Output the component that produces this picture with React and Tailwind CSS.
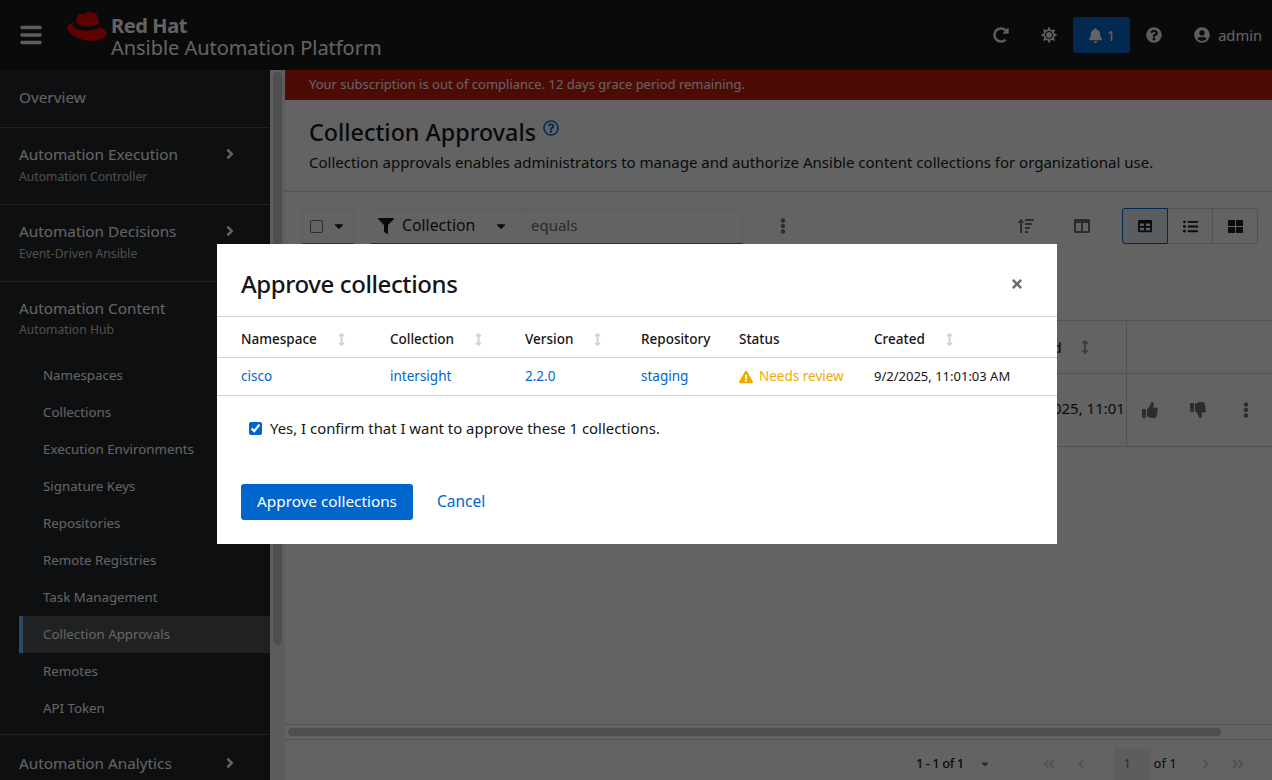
import {
  FaBars, FaRedoAlt, FaSun, FaBell, FaQuestionCircle, FaUserCircle, FaAngleRight, FaRegQuestionCircle,
  FaCaretDown, FaFilter, FaEllipsisV, FaSortAmountUp, FaColumns, FaTable, FaListUl, FaThLarge, FaArrowsAltV,
  FaThumbsUp, FaThumbsDown, FaTimes, FaExclamationTriangle, FaAngleDoubleLeft, FaAngleLeft, FaAngleDoubleRight,
} from 'react-icons/fa'

const hubItems = [
  'Namespaces', 'Collections', 'Execution Environments', 'Signature Keys', 'Repositories',
  'Remote Registries', 'Task Management', 'Collection Approvals', 'Remotes', 'API Token',
]

function NavGroup({ title, sub }) {
  return (
    <div className="flex h-[77px] flex-col justify-center border-b border-[#4f5255] pb-[2px] pl-[19px] pr-[32px]">
      <div className="flex items-center justify-between text-white">
        <span className="text-[15.3px] leading-[22px]">{title}</span>
        <FaAngleRight className="text-[16px]" />
      </div>
      <span className="mt-[2px] text-[12.2px] leading-[20px] text-[#c7c7c7]">{sub}</span>
    </div>
  )
}

function Sidebar() {
  return (
    <aside className="flex h-full w-[285px] shrink-0 bg-[#212427]">
      <nav className="w-[270px] shrink-0 overflow-hidden">
        <div className="flex h-[58px] items-center border-b border-[#4f5255] pb-[2px] pl-[19px] text-[15.3px] text-white">Overview</div>
        <NavGroup title="Automation Execution" sub="Automation Controller" />
        <NavGroup title="Automation Decisions" sub="Event-Driven Ansible" />
        <div className="border-b border-[#4f5255] pb-[7px]">
          <div className="flex h-[75px] flex-col justify-center pb-[3px] pl-[19px] text-white">
            <span className="text-[15.3px] leading-[22px]">Automation Content</span>
            <span className="mt-[1px] text-[12.2px] leading-[20px] text-[#c7c7c7]">Automation Hub</span>
          </div>
          {hubItems.map(item => (
            item === 'Collection Approvals' ? (
              <div key={item} className="ml-[19px] flex h-[37px] items-center border-l-[4px] border-[#73bcf7] bg-[#4f5255] pl-[20px] text-[13.3px] text-white">{item}</div>
            ) : (
              <div key={item} className="flex h-[37px] items-center pl-[43px] text-[13.3px] text-white">{item}</div>
            )
          ))}
        </div>
        <div className="flex h-[56px] items-center justify-between pl-[19px] pr-[32px] text-[15.3px] text-white">
          <span>Automation Analytics</span>
          <FaAngleRight className="text-[16px]" />
        </div>
      </nav>
      <div className="h-full w-[15px] bg-[#f0f0f0] px-[3px] pt-[2px]">
        <div className="h-[573px] w-[9px] rounded-full bg-[#c8c8c8]" />
      </div>
    </aside>
  )
}

function Header() {
  return (
    <header className="flex h-[70px] shrink-0 items-center bg-[#151515] text-white">
      <FaBars className="ml-[19px] text-[24px] text-[#f0f0f0]" />
      <svg className="ml-[24px] mb-[17px] h-[29px] w-[40px]" viewBox="0 0 40 29">
        <path fill="#ee0000" d="M26 15.5c2.6 0 6.300-.5 6.300-3.600 0-.3 0-.5-.1-.7l-1.500-6.700C30.300 3 29.900 2.100 27.300.8 25.300-.2 21 -.1 19 .6c-1 .4-1.400 1.600-2.300 1.600-.9 0-1.900-.9-3.300-.9-1.400 0-2.200.9-2.900 2.700 0 0-1.900 5.400-2.200 6.200 0 .1 0 .3 0 .4 0 2.100 8.200 8.900 18.700 4.900z" />
        <path fill="#ee0000" d="M33 13c.4 1.800.4 2-.1 2.600-.2.300 0 .4.200.4 3.500 0 6.700 2.900 6.700 5.500 0 4.900-7.800 7.500-15.300 7.500C14.200 29 1 22.600.3 17.100c-.3-2.900 2.100-6.400 6.700-6.400l-.6 2c-.2.800.6 1.500 2.200 2.600 2.300 1.500 5.900 3 10.300 3 6.900 0 11.300-2 14.100-5.300z" />
        <path fill="#151515" d="M6.700 11l1-2.700c.4 2.100 8 9 19 5.400 2.400-.5 5-1.200 5.700-3 .5 1.500.8 2.400.6 3-.5 2-4 5-14 5-7 0-13.500-3.500-13-5.500z" />
      </svg>
      <div className="ml-[4px] mt-[4px] flex flex-col">
        <span className="text-[20px] font-bold leading-[22px] tracking-[-0.4px]">Red Hat</span>
        <span className="text-[20px] leading-[22px] tracking-[-0.05px]">Ansible Automation Platform</span>
      </div>
      <div className="ml-auto flex items-center">
        <FaRedoAlt className="text-[16px] text-[#f0f0f0]" />
        <FaSun className="ml-[32px] text-[16px] text-[#f0f0f0]" />
        <div className="ml-[16px] flex h-[36px] w-[57px] items-center justify-center gap-[4px] rounded-[3px] bg-[#0066cc] text-[15px]">
          <FaBell className="text-[15px]" />
          <span>1</span>
        </div>
        <FaQuestionCircle className="ml-[16px] text-[16px] text-[#f0f0f0]" />
        <FaUserCircle className="ml-[32px] text-[16px] text-[#f0f0f0]" />
        <span className="ml-[8px] mr-[10px] text-[14.7px]">admin</span>
      </div>
    </header>
  )
}

function Toolbar() {
  return (
    <div className="flex h-[128px] items-start px-[17px] pt-[16px] text-[15px]">
      <div className="flex h-[36px] w-[52px] shrink-0 items-center gap-[9px] border border-[#f0f0f0] border-b-[#6a6e73] pl-[7px]">
        <span className="h-[13px] w-[13px] rounded-[2px] border border-[#6a6e73]" />
        <FaCaretDown className="text-[14px] text-[#151515]" />
      </div>
      <div className="ml-[16px] flex h-[36px] w-[373px] shrink-0 border border-[#f0f0f0] border-b-[#6a6e73]">
        <div className="flex w-[152px] items-center border-r border-[#f0f0f0] pl-[7px] text-[15.8px] text-[#151515]">
          <FaFilter className="text-[16px]" />
          <span className="ml-[8px]">Collection</span>
          <FaCaretDown className="ml-[19px] text-[14px]" />
        </div>
        <span className="flex items-center pb-[2px] pl-[8px] text-[#6a6e73]">equals</span>
      </div>
      <FaEllipsisV className="ml-[32px] mt-[10px] shrink-0 text-[16px] text-[#6a6e73]" />
      <FaSortAmountUp className="ml-[227px] mt-[10px] shrink-0 text-[16px] text-[#6a6e73]" />
      <FaColumns className="ml-[40px] mt-[10px] shrink-0 text-[16px] text-[#6a6e73]" />
      <div className="ml-[32px] flex h-[36px] w-[136px] shrink-0 rounded-[3px] border border-[#d2d2d2] text-[#151515]">
        <div className="-my-px -ml-px flex w-[46px] items-center justify-center rounded-l-[3px] border border-[#0066cc] bg-[#e7f1fa]"><FaTable className="text-[14px]" /></div>
        <div className="flex w-[45px] items-center justify-center border-r border-[#d2d2d2]"><FaListUl className="text-[15px] text-[#151515]" /></div>
        <div className="flex flex-1 items-center justify-center"><FaThLarge className="text-[15px]" /></div>
      </div>
    </div>
  )
}

function MainTable() {
  return (
    <div className="flex-1 overflow-hidden">
      <div className="flex h-[54px] border-y border-[#d2d2d2]">
        <div className="flex w-[841px] shrink-0 items-center gap-[16px] pl-[724px] text-[14px] font-medium">
          <span className="text-[#151515]">Created</span>
          <FaArrowsAltV className="text-[#a0a0a0]" />
        </div>
        <div className="flex-1 border-l border-[#d2d2d2]" />
      </div>
      <div className="flex h-[73px] border-b border-[#d2d2d2]">
        <div className="w-[841px] shrink-0 overflow-hidden whitespace-nowrap pl-[731px] pt-[22px] text-[15px] leading-[24px] text-[#151515]">9/2/2025, 11:01:03 AM</div>
        <div className="flex flex-1 items-center border-l border-[#d2d2d2] pl-[15px] text-[16px] text-[#6a6e73]">
          <FaThumbsUp />
          <FaThumbsDown className="ml-[32px]" />
          <FaEllipsisV className="ml-[32px]" />
        </div>
      </div>
    </div>
  )
}

function Footer() {
  return (
    <div className="shrink-0">
      <div className="h-[16px] border-y border-[#d2d2d2] px-[3px] py-[3px]">
        <div className="h-[8px] w-[933px] rounded-full bg-[#c8c8c8]" />
      </div>
      <div className="flex h-[40px] items-center pt-[8px] text-[14px] text-[#151515]">
        <span className="ml-[631px] text-[13px] font-medium tracking-[-0.5px]">1 - 1 of 1</span>
        <FaCaretDown className="ml-[15px] text-[12px] text-[#6a6e73]" />
        <FaAngleDoubleLeft className="ml-[51px] text-[#d2d2d2]" />
        <FaAngleLeft className="ml-[18px] text-[#d2d2d2]" />
        <div className="ml-[26px] flex h-[32px] w-[37px] items-center bg-[#f0f0f0] pl-[10px] text-[13px] text-[#6a6e73]">1</div>
        <span className="ml-[3px] text-[13px]">of 1</span>
        <FaAngleRight className="ml-[22px] text-[#d2d2d2]" />
        <FaAngleDoubleRight className="ml-[18px] text-[#d2d2d2]" />
      </div>
    </div>
  )
}

function SortHead({ label, width, sort }) {
  return (
    <th className={`${width} p-0 pt-[4px] text-left text-[13.5px] font-medium`}>
      <span className="flex items-center">
        {label}
        {sort && <FaArrowsAltV className="ml-[18px] text-[13px] text-[#d2d2d2]" />}
      </span>
    </th>
  )
}

function ApproveModal() {
  return (
    <div className="fixed inset-0 flex items-center justify-center bg-[rgba(3,3,3,0.62)] pl-[2px] pt-[8px]">
      <div className="flex h-[300px] w-[840px] flex-col bg-white text-[#151515]">
        <div className="flex h-[72px] items-center justify-between pl-[24px] pr-[33px] pt-[8px]">
          <h1 className="text-[24px] font-medium leading-[32px] tracking-[-0.4px]">Approve collections</h1>
          <FaTimes className="text-[14px] text-[#6a6e73]" />
        </div>
        <table className="w-full table-fixed border-collapse">
          <thead>
            <tr className="h-[41px] border-y border-[#d2d2d2]">
              <th className="w-[24px] p-0" />
              <SortHead label="Namespace" width="w-[149px]" sort />
              <SortHead label="Collection" width="w-[135px]" sort />
              <SortHead label="Version" width="w-[116px]" sort />
              <SortHead label="Repository" width="w-[98px]" />
              <SortHead label="Status" width="w-[135px]" />
              <SortHead label="Created" sort />
            </tr>
          </thead>
          <tbody>
            <tr className="h-[38px] border-b border-[#d2d2d2] text-[13.5px]">
              <td className="p-0" />
              <td className="p-0 text-[#0066cc]">cisco</td>
              <td className="p-0 text-[#0066cc]">intersight</td>
              <td className="p-0 text-[#0066cc]">2.2.0</td>
              <td className="p-0 text-[#0066cc]">staging</td>
              <td className="p-0 text-[#f0ab00]">
                <span className="flex items-center gap-[6px]"><FaExclamationTriangle className="text-[14px]" />Needs review</span>
              </td>
              <td className="p-0 text-[13px]">9/2/2025, 11:01:03 AM</td>
            </tr>
          </tbody>
        </table>
        <label className="ml-[32px] mt-[21px] flex items-center text-[14.9px] leading-[22px]">
          <input type="checkbox" defaultChecked className="h-[13px] w-[13px] accent-[#0066cc]" />
          <span className="ml-[8px]">Yes, I confirm that I want to approve these 1 collections.</span>
        </label>
        <div className="ml-[24px] mt-[45px] flex items-center text-[15.3px]">
          <button className="h-[36px] w-[172px] rounded-[3px] bg-[#0066cc] pb-[2px] text-white">Approve collections</button>
          <button className="ml-[24px] text-[15.5px] text-[#0066cc]">Cancel</button>
        </div>
      </div>
    </div>
  )
}

export default function App() {
  return (
    <div className="flex h-screen flex-col overflow-hidden bg-white font-['Noto_Sans',sans-serif]">
      <Header />
      <div className="flex min-h-0 flex-1">
        <Sidebar />
        <main className="flex min-w-0 flex-1 flex-col">
          <div className="flex h-[30px] shrink-0 items-center bg-[#c9190b] pl-[24px] text-[13px] text-white">
            Your subscription is out of compliance. 12 days grace period remaining.
          </div>
          <div className="h-[92px] shrink-0 border-b border-[#d2d2d2] pl-[24px] pt-[16px]">
            <div className="flex items-start">
              <h2 className="text-[23.3px] font-medium leading-[32px] text-[#151515]">Collection Approvals</h2>
              <FaRegQuestionCircle className="ml-[7px] mt-[4px] text-[16px] text-[#0066cc]" />
            </div>
            <p className="mt-[2px] text-[15px] leading-[24px] text-[#151515]">
              Collection approvals enables administrators to manage and authorize Ansible content collections for organizational use.
            </p>
          </div>
          <Toolbar />
          <MainTable />
          <Footer />
        </main>
      </div>
      <ApproveModal />
    </div>
  )
}
